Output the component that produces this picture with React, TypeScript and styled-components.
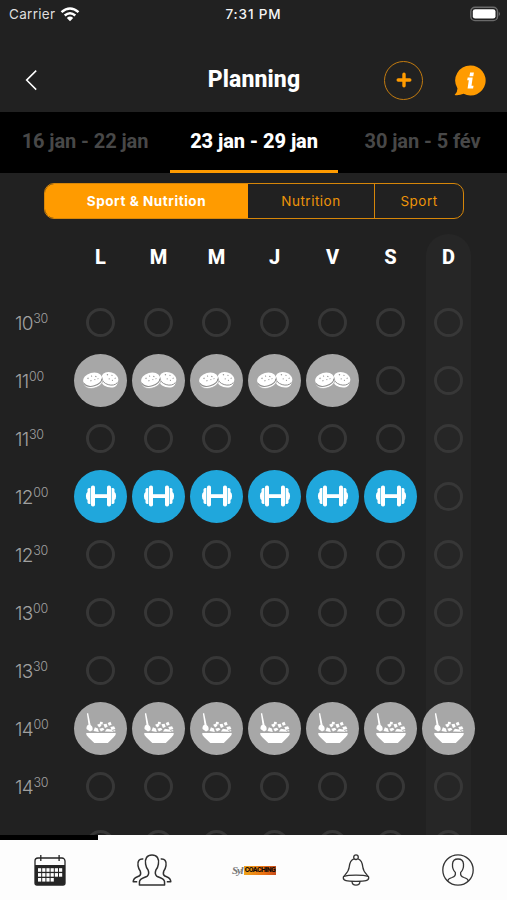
import React from "react";
import styled, { createGlobalStyle } from "styled-components";

const ORANGE = "#ff9b00";

const GlobalStyle = createGlobalStyle`
  * { box-sizing: border-box; }
  body { margin: 0; background: #212121; }
`;

const Screen = styled.div`
  width: 507px;
  height: 900px;
  overflow: hidden;
  display: flex;
  flex-direction: column;
  background: #212121;
  color: #fff;
  font-family: Inter, "Liberation Sans", sans-serif;
`;

const StatusBar = styled.div`
  height: 28px;
  flex: none;
  display: grid;
  grid-template-columns: 207px 75px 1fr;
  align-items: center;
  padding: 0 6px 0 9px;
  font-size: 13.5px;
  line-height: 28px;
  color: #dedede;
`;

const Carrier = styled.div`
  display: flex;
  align-items: center;
  gap: 5px;
  letter-spacing: 0.3px;
`;

const Clock = styled.div`
  font-weight: 500;
  font-size: 13.5px;
  letter-spacing: 0.85px;
  text-align: center;
  white-space: nowrap;
  color: #f4f4f4;
`;

const Battery = styled.div`
  display: flex;
  justify-content: flex-end;
  padding-bottom: 1px;
`;

const Header = styled.header`
  height: 84px;
  flex: none;
  display: grid;
  grid-template-columns: 122px 1fr 122px;
  align-items: center;
  padding: 20px 21px 0 24px;
`;

const Title = styled.h1`
  margin: 0 0 0 -2px;
  text-align: center;
  font: 800 23px/30px Roboto, sans-serif;
  letter-spacing: 0.1px;
`;

const Actions = styled.div`
  display: flex;
  align-items: center;
  justify-content: flex-end;
  gap: 31px;
`;

const IconButton = styled.button`
  display: flex;
  padding: 0;
  border: 0;
  background: none;
  color: inherit;
`;

const AddButton = styled(IconButton)`
  width: 39px;
  height: 39px;
  margin-right: -1px;
  border: 1.4px solid #c27b10;
  border-radius: 50%;
  align-items: center;
  justify-content: center;
`;

const WeekTabs = styled.nav`
  height: 61px;
  flex: none;
  display: grid;
  grid-template-columns: 170px 168px 169px;
  background: #000;
`;

const WeekTab = styled.div<{ $active?: boolean }>`
  text-align: center;
  font: ${(p) => (p.$active ? 800 : 700)} 20px/58px Roboto, sans-serif;
  letter-spacing: -0.08px;
  color: ${(p) => (p.$active ? "#fff" : "#484848")};
  border-bottom: 3px solid ${(p) => (p.$active ? ORANGE : "transparent")};
  white-space: nowrap;
`;

const Body = styled.main`
  height: 662px;
  flex: none;
  overflow: hidden;
`;

const Segments = styled.div`
  width: 420px;
  height: 36px;
  margin: 10px 0 0 44px;
  display: grid;
  grid-template-columns: 203px 126px 1fr;
  border: 1.5px solid #d68609;
  border-radius: 10px;
  overflow: hidden;
`;

const Segment = styled.div<{ $active?: boolean }>`
  text-align: center;
  font-size: 13.5px;
  line-height: 34px;
  letter-spacing: ${(p) => (p.$active ? "0.55px" : "0.5px")};
  font-weight: ${(p) => (p.$active ? 700 : 400)};
  color: ${(p) => (p.$active ? "#fff" : "#ed9409")};
  background: ${(p) => (p.$active ? ORANGE : "transparent")};
  & + & + & { border-left: 1.5px solid #d68609; }
`;

const Calendar = styled.div`
  display: flex;
  margin-top: 15px;
`;

const Times = styled.div`
  width: 78px;
  padding: 61px 0 0 15px;
`;

const Time = styled.div`
  height: 58px;
  display: flex;
  align-items: center;
  font: 300 19px/24px Inter, sans-serif;
  letter-spacing: -0.7px;
  color: #a0a0a0;
`;

const Minutes = styled.span`
  font-size: 12.5px;
  font-weight: 300;
  letter-spacing: -0.3px;
  line-height: 14px;
  padding-bottom: 10px;
  margin-left: 0.5px;
`;

const Days = styled.div`
  display: flex;
  gap: 13px;
`;

const Day = styled.div<{ $highlight: boolean }>`
  width: 45px;
  height: 601px;
  flex: none;
  border-radius: 22px 22px 0 0;
  background: ${(p) => (p.$highlight ? "#262626" : "transparent")};
`;

const DayLabel = styled.div`
  height: 46px;
  margin-bottom: 13px;
  text-align: center;
  font: 800 20px/47px Roboto, sans-serif;
`;

const Slot = styled.div`
  height: 58px;
  display: flex;
  align-items: center;
  justify-content: center;
`;

const EmptyDot = styled.div`
  width: 29px;
  height: 29px;
  border: 3px solid #373737;
  border-radius: 50%;
`;

const Activity = styled.div<{ $color: string }>`
  width: 53px;
  height: 53px;
  flex: none;
  border-radius: 50%;
  background: ${(p) => p.$color};
  display: flex;
  align-items: center;
  justify-content: center;
`;

const TabBar = styled.nav`
  height: 65px;
  flex: none;
  display: grid;
  grid-template-columns: 98px 107px 98px 105px 99px;
  background: #fdfdfd;
`;

const TabItem = styled.div<{ $active?: boolean }>`
  display: flex;
  align-items: center;
  justify-content: center;
  border-top: 5px solid ${(p) => (p.$active ? "#000" : "transparent")};
  padding-left: ${(p) => (p.$active ? "2px" : "0")};
`;

const Logo = styled.div`
  display: flex;
  align-items: center;
  width: 44px;
  height: 14px;
`;

const LogoScript = styled.span`
  width: 12px;
  font: italic 700 11px/12px "Liberation Serif", serif;
  letter-spacing: -1.2px;
  color: #777;
`;

const LogoPlate = styled.span`
  width: 32px;
  height: 9px;
  overflow: hidden;
  background: linear-gradient(90deg, #f0a51b, #e96f12 65%, #c84b1c);
  color: #160d05;
  text-align: center;
  font: 900 7px/9px Roboto, sans-serif;
  letter-spacing: -0.6px;
`;

const WifiIcon = () => (
  <svg width="20" height="15" viewBox="0 0 20 15" fill="none" stroke="#fff" strokeWidth="2.5">
    <path d="M1.5 5.1Q10-2.2 18.5 5.1" />
    <path d="M4.7 8.5Q10 4 15.3 8.5" />
    <path d="M10 14.2 6.8 11Q10 8.2 13.2 11Z" fill="#fff" stroke="none" />
  </svg>
);

const BatteryIcon = () => (
  <svg width="31" height="16" viewBox="0 0 31 16">
    <rect x=".8" y="1.2" width="26.7" height="13.4" rx="4.2" fill="none" stroke="#6a6a6a" strokeWidth="1.4" />
    <rect x="2.8" y="3.2" width="22.7" height="9.4" rx="2.4" fill="#fff" />
    <path d="M28.8 5.7q2 2.2 0 4.5z" fill="#7a7a7a" />
  </svg>
);

const BackIcon = () => (
  <svg width="14" height="22" viewBox="0 0 14 22" fill="none" stroke="#fff" strokeWidth="1.5">
    <path d="M12.2 1.6 2.6 11.1l9.6 9.5" />
  </svg>
);

const PlusIcon = () => (
  <svg width="16" height="16" viewBox="0 0 16 16" fill="none" stroke={ORANGE} strokeWidth="3.4" strokeLinecap="round">
    <path d="M8 2.2v11.6M2.2 8h11.6" />
  </svg>
);

const InfoIcon = () => (
  <svg width="33" height="31" viewBox="0 0 33 31">
    <path d="M17.5.5a15 15 0 1 1-6.8 28.3Q6 30.7 1.6 30q3-2.4 2.8-6.8A15 15 0 0 1 17.5.5Z" fill={ORANGE} />
    <path d="M17.1 7.6h3.8l-.6 3.6h-3.8zM14.7 12.5h5l-1.2 8.2h2l-.4 2.8h-5.5l1.2-8.2h-1.6z" fill="#fff" />
  </svg>
);

const SnackIcon = () => (
  <svg width="36" height="19" viewBox="0 0 36 19" fill="#fff">
    <g transform="rotate(17 26.5 9)">
      <path d="M18 7.4v4c1.6 6.6 15.6 6.6 17 0v-4z" />
      <ellipse cx="26.5" cy="7.2" rx="8.5" ry="6" />
      <path d="M18.2 9c2 6.4 14.8 6.4 16.6 0" fill="none" stroke="#8d8d8d" strokeWidth=".9" />
      <path d="M22.5 5l1-.8M27 3.8h1M31 5.4l.8.6M25.4 8h1M29 8.8l.8-.5" fill="none" stroke="#8d8d8d" strokeWidth="1.1" />
    </g>
    <g transform="rotate(-15 10 10)">
      <path d="M.4 8.2v3.6c1.8 7.2 17.4 7.2 19.2 0V8.2z" stroke="#a7a7a7" strokeWidth=".7" />
      <ellipse cx="10" cy="8" rx="9.5" ry="6.4" />
      <path d="M.8 10c2.2 6.6 16.2 6.6 18.4 0" fill="none" stroke="#8d8d8d" strokeWidth="1" />
      <path d="M5.4 6.5l1-.8M9.4 4.9h1M13.4 6l1 .7M7.6 9.2h1M11.8 9.4l.8-.5M15.4 8.8v.7" fill="none" stroke="#8d8d8d" strokeWidth="1.1" />
    </g>
  </svg>
);

const DumbbellIcon = () => (
  <svg width="32" height="22" viewBox="0 0 32 22" fill="#fff">
    <rect x="9" y="9.2" width="14" height="3.8" />
    <rect x="6" y=".5" width="4" height="21" rx="1.8" />
    <rect x="22" y=".5" width="4" height="21" rx="1.8" />
    <path d="M5.4 3v16Q3 19.3 2.5 17.8V15Q.9 14.2.9 11t1.6-4V4.2Q3 2.7 5.4 3ZM26.6 3v16q2.4.3 2.9-1.2V15q1.6-.8 1.6-4t-1.6-4V4.2Q29 2.7 26.6 3Z" />
  </svg>
);

const BowlIcon = () => (
  <svg width="32" height="30" viewBox="0 0 32 30" fill="#fff">
    <path d="M1.2 20h29.6q.4 2.2-2.2 4.3L22.8 30H9.3l-6-5.8Q.7 22.2 1.2 20Z" />
    <path d="M1.9.4 3.1.1 5.6 12q2.6 1.5 1.9 5.2L5 18.4 1.5 16q-.3-3.4 2-4.3Z" />
    <path d="m8.5 18 1.4-3.8 3 1.2.9 3.5zM12.1 11.8l2.9-1.4 1.5 2.3-2.4 1.8zM15 8.7l2.8.4-.2 2.3h-2.8zM18.4 11.2l3.2-.5 1.1 3-2.8 1.2zM22.7 10l2.8-1.2 1.2 3-2.8 1zM25.3 14l3.8-.7 1.3 2.6-3.8 1zM19.9 18.5l2-2.7 4.3.8 2.1 2.1zM14.3 15.8l3.8-1 1.3 2-3.5 1.7zM27.2 18l3-.9v1.5z" />
  </svg>
);

const CalendarIcon = () => (
  <svg width="32" height="32" viewBox="0 0 32 32">
    <path d="M6.8 4H4a3 3 0 0 0-3 3v22a2 2 0 0 0 2 2h26a2 2 0 0 0 2-2V7a3 3 0 0 0-3-3h-2.3M6.8 4h18.3M6.8 1v6M25.1 1v6" fill="none" stroke="#252525" strokeWidth="1.3" />
    <path d="M1 11h30v18a2 2 0 0 1-2 2H3a2 2 0 0 1-2-2z" fill="#252525" />
    {[14.2, 19.1, 24].map((y, row) =>
      [4, 8.2, 12.4, 16.6, 20.8, 25].slice(0, row === 2 ? 4 : 6).map((x) => (
        <rect key={`${x}-${y}`} x={x} y={y} width="3.2" height="3.6" fill="#fff" />
      ))
    )}
  </svg>
);

const GroupIcon = () => (
  <svg width="40" height="32" viewBox="0 0 40 32" fill="none" stroke="#303030" strokeWidth="1.5" strokeLinejoin="round">
    <path d="M20 1c-5 0-7.4 3.5-6.4 9.2.4 2.7 1.1 4.2 2.5 5.9.9 2.5.7 4.8-.8 6-2.4 1.8-7.2 1.8-7.8 5.4L7.4 31h25.2l-.1-3.5c-.6-3.6-5.4-3.6-7.8-5.4-1.5-1.2-1.7-3.5-.8-6 1.4-1.7 2.1-3.2 2.5-5.9C27.4 4.5 25 1 20 1Z" />
    <path d="M11.3 5.1C7.2 4.5 5.2 7 6 11.7c.4 2.5 1.2 4.1 2.3 5.5.7 2.2.5 3.9-1.1 4.8-2.4 1.3-5.9 1.3-6 5.8h4M28.7 5.1C32.8 4.5 34.8 7 34 11.7c-.4 2.5-1.2 4.1-2.3 5.5-.7 2.2-.5 3.9 1.1 4.8 2.4 1.3 5.9 1.3 6 5.8h-4" />
  </svg>
);

const BellIcon = () => (
  <svg width="28" height="32" viewBox="0 0 28 32" fill="none" stroke="#343434" strokeWidth="1.3">
    <circle cx="14" cy="3.2" r="2.3" />
    <path d="M11.8 4.8C8.2 6.2 7.6 9 7.2 13c-.4 5-4.1 7.4-5.7 9.7-1.2 4.4 3.7 4.6 12.5 4.6s13.7-.2 12.5-4.6c-1.6-2.3-5.3-4.7-5.7-9.7-.4-4-1-6.8-4.6-8.2" />
    <path d="M1.8 22.5c5-1.8 19.4-1.8 24.4 0M10 27.2c.1 5.2 7.9 5.2 8 0" />
  </svg>
);

const ProfileIcon = () => (
  <svg width="32" height="32" viewBox="0 0 32 32" fill="none" stroke="#343434" strokeWidth="1.3">
    <circle cx="16" cy="16" r="15.2" />
    <path d="M5.5 27q.7-2.4 4.5-3.5c2.5-.8 4-2 3.3-5.1-2.2-2.3-3-5.1-2.8-8.3C10.7 6.5 13 5 16 5s5.3 1.5 5.5 5.1c.2 3.2-.6 6-2.8 8.3-.7 3.1.8 4.3 3.3 5.1Q25.8 24.6 26.5 27" />
  </svg>
);

type Kind = "snack" | "sport" | "meal";

const kinds: Record<Kind, { color: string; Icon: React.FC }> = {
  snack: { color: "#a7a7a7", Icon: SnackIcon },
  sport: { color: "#20a7dc", Icon: DumbbellIcon },
  meal: { color: "#a7a7a7", Icon: BowlIcon },
};

const slots: { hour: string; minutes: string; kind?: Kind; days?: number }[] = [
  { hour: "10", minutes: "30" },
  { hour: "11", minutes: "00", kind: "snack", days: 5 },
  { hour: "11", minutes: "30" },
  { hour: "12", minutes: "00", kind: "sport", days: 6 },
  { hour: "12", minutes: "30" },
  { hour: "13", minutes: "00" },
  { hour: "13", minutes: "30" },
  { hour: "14", minutes: "00", kind: "meal", days: 7 },
  { hour: "14", minutes: "30" },
];

const ScheduleSlot = ({ kind }: { kind?: Kind }) => {
  if (!kind) return <Slot><EmptyDot /></Slot>;
  const { color, Icon } = kinds[kind];
  return <Slot><Activity $color={color}><Icon /></Activity></Slot>;
};

export default function App() {
  return (
    <Screen>
      <GlobalStyle />
      <StatusBar>
        <Carrier>Carrier <WifiIcon /></Carrier>
        <Clock>7:31 PM</Clock>
        <Battery><BatteryIcon /></Battery>
      </StatusBar>
      <Header>
        <IconButton aria-label="Retour"><BackIcon /></IconButton>
        <Title>Planning</Title>
        <Actions>
          <AddButton aria-label="Ajouter"><PlusIcon /></AddButton>
          <IconButton aria-label="Informations"><InfoIcon /></IconButton>
        </Actions>
      </Header>
      <WeekTabs>
        <WeekTab>16 jan - 22 jan</WeekTab>
        <WeekTab $active>23 jan - 29 jan</WeekTab>
        <WeekTab>30 jan - 5 fév</WeekTab>
      </WeekTabs>
      <Body>
        <Segments>
          <Segment $active>Sport &amp; Nutrition</Segment>
          <Segment>Nutrition</Segment>
          <Segment>Sport</Segment>
        </Segments>
        <Calendar>
          <Times>
            {slots.map((s) => (
              <Time key={s.hour + s.minutes}>{s.hour}<Minutes>{s.minutes}</Minutes></Time>
            ))}
          </Times>
          <Days>
            {["L", "M", "M", "J", "V", "S", "D"].map((label, day) => (
              <Day key={day} $highlight={day === 6}>
                <DayLabel>{label}</DayLabel>
                {slots.map((s) => (
                  <ScheduleSlot key={s.hour + s.minutes} kind={day < (s.days ?? 0) ? s.kind : undefined} />
                ))}
                <ScheduleSlot />
              </Day>
            ))}
          </Days>
        </Calendar>
      </Body>
      <TabBar>
        <TabItem $active><CalendarIcon /></TabItem>
        <TabItem><GroupIcon /></TabItem>
        <TabItem><Logo><LogoScript>Syl</LogoScript><LogoPlate>COACHING</LogoPlate></Logo></TabItem>
        <TabItem><BellIcon /></TabItem>
        <TabItem><ProfileIcon /></TabItem>
      </TabBar>
    </Screen>
  );
}
